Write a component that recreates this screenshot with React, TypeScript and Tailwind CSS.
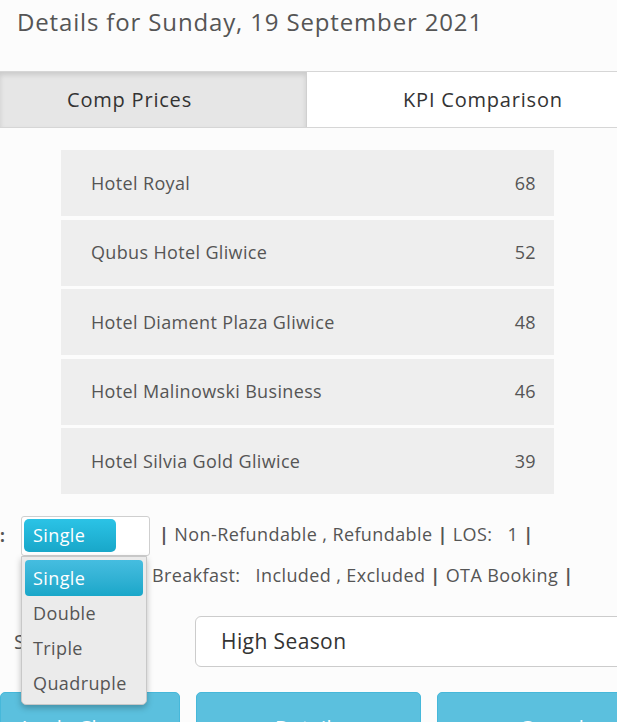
import React from "react";

const rows: [string, number][] = [
  ["Hotel Royal", 68],
  ["Qubus Hotel Gliwice", 52],
  ["Hotel Diament Plaza Gliwice", 48],
  ["Hotel Malinowski Business", 46],
  ["Hotel Silvia Gold Gliwice", 39],
];

const Sep = () => <span className="text-[#555] font-bold mx-[5px]">|</span>;

export default function App() {
  return (
    <div
      className="relative w-[617px] h-[722px] overflow-hidden bg-[#fcfcfc] text-[#555]"
      style={{ fontFamily: '"Open Sans", "Liberation Sans", sans-serif' }}
    >
      <div className="h-[71px] pl-[17px] pt-[4px] text-[24px] tracking-[0.85px] leading-[36px] text-[#555]">
        Details for Sunday, 19 September 2021
      </div>

      <div className="flex h-[57px] border-t border-b border-[#d6d6d6]">
        <div className="w-[307px] flex items-center pl-[67px] bg-[#e6e6e6] border-r border-[#d0d0d0] shadow-[inset_0_3px_5px_rgba(0,0,0,0.12)] text-[20px] tracking-[0.8px] text-[#333]">
          Comp Prices
        </div>
        <div className="flex-1 flex items-center pl-[96px] bg-white text-[20px] tracking-[0.8px] text-[#333]">
          KPI Comparison
        </div>
      </div>

      <div className="ml-[61px] mt-[22px] w-[493px] flex flex-col gap-[3.5px]">
        {rows.map(([name, v]) => (
          <div
            key={name}
            className="h-[66px] bg-[#eeeeee] flex items-center justify-between pl-[30px] pr-[18px] text-[18px] tracking-[0.35px] text-[#555]"
          >
            <span>{name}</span>
            <span>{v}</span>
          </div>
        ))}
      </div>

      <div className="mt-[22px] flex items-start">
        <div className="w-[21px] h-[40px] flex items-center text-[17px] font-bold">:</div>
        <div className="w-[129px] h-[40px] border border-[#cfcfcf] rounded-[3px] bg-white p-[2px] shrink-0">
          <div className="w-[92px] h-[33px] rounded-[5px] bg-gradient-to-b from-[#2bc3e6] to-[#18a7c9] text-white text-[18px] tracking-[0.4px] flex items-center pl-[9px]">
            Single
          </div>
        </div>
        <div className="text-[18px] tracking-[0.4px] leading-[41px] whitespace-nowrap">
          <div className="h-[40px] pl-[4px] -mt-[2px]">
            <Sep />Non-Refundable , Refundable<Sep />LOS:&nbsp;&nbsp; 1<Sep />
          </div>
          <div className="pl-[2px] mt-[1px]">
            Breakfast:&nbsp;&nbsp; Included , Excluded<Sep />OTA Booking<Sep />
          </div>
        </div>
      </div>

      <div className="mt-[20px] flex items-center">
        <div className="w-[195px] shrink-0 pl-[14px] text-[20px]">S</div>
        <div className="w-[440px] shrink-0 h-[51px] border border-[#cccccc] rounded-[6px] bg-white flex items-center pl-[25px] text-[21px] tracking-[0.4px] text-[#333]">
          High Season
        </div>
      </div>

      <div className="mt-[25px] flex gap-[16px]">
        {[
          ["Apply Changes", "w-[180px]"],
          ["Details", "w-[225px]"],
          ["Cancel", "w-[230px]"],
        ].map(([t, w]) => (
          <div
            key={t}
            className={`${w} shrink-0 h-[46px] rounded-[5px] bg-[#5bc0de] border border-[#46b8da] text-white text-[20px] tracking-[0.5px] leading-[28px] flex items-start justify-center pt-[21px]`}
          >
            {t}
          </div>
        ))}
      </div>

      <div className="absolute left-[21px] top-[556px] w-[126px] h-[149px] bg-[#ebebeb] border border-[#c8c8c8] rounded-b-[5px] shadow-[0_3px_6px_rgba(0,0,0,0.25)] p-[3px] text-[18px] tracking-[0.4px] text-[#555]">
        <div className="h-[36px] rounded-[4px] bg-gradient-to-b from-[#45bde0] to-[#18a7c9] text-white flex items-center pl-[8px]">
          Single
        </div>
        <div className="h-[34px] flex items-center pl-[8px]">Double</div>
        <div className="h-[36px] flex items-center pl-[8px]">Triple</div>
        <div className="h-[35px] flex items-center pl-[8px]">Quadruple</div>
      </div>
    </div>
  );
}
